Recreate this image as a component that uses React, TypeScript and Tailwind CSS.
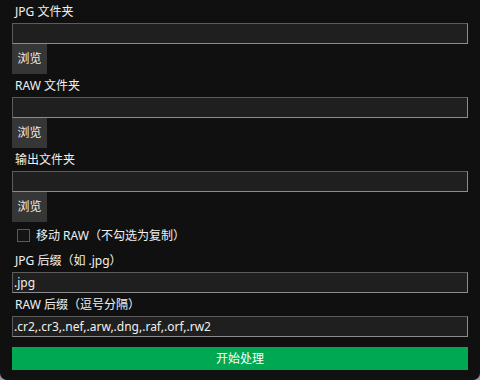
import { useState } from 'react';

const font = { fontFamily: '"Noto Sans", "Noto Sans CJK SC", sans-serif' };

function Label({ text }: { text: string }) {
  return <div className="h-[23px] flex items-center pl-[3px] text-[12px] text-[#f0f0f0]">{text}</div>;
}

function Field({ value, onChange }: { value: string; onChange: (v: string) => void }) {
  return (
    <input
      value={value}
      onChange={(e) => onChange(e.target.value)}
      className="h-[21px] w-full bg-[#1f1f1f] border border-t-[#5c5c5c] border-l-[#5c5c5c] border-b-[#8c8c8c] border-r-[#8c8c8c] px-[1px] text-[12px] text-[#f0f0f0] outline-none"
      style={font}
    />
  );
}

function Browse() {
  return (
    <div className="h-[30px]">
      <button className="h-[30px] w-[35px] bg-[#363636] text-[12px] text-[#f0f0f0]" style={font}>
        浏览
      </button>
    </div>
  );
}

export default function App() {
  const [jpgDir, setJpgDir] = useState('');
  const [rawDir, setRawDir] = useState('');
  const [outDir, setOutDir] = useState('');
  const [moveRaw, setMoveRaw] = useState(false);
  const [jpgExt, setJpgExt] = useState('.jpg');
  const [rawExt, setRawExt] = useState('.cr2,.cr3,.nef,.arw,.dng,.raf,.orf,.rw2');

  return (
    <div className="w-[480px] h-[380px] bg-[#9a9a9a]" style={font}>
      <div className="h-full bg-[#101010] rounded-b-[7px] px-3 flex flex-col">
        <Label text="JPG 文件夹" />
        <Field value={jpgDir} onChange={setJpgDir} />
        <Browse />

        <Label text="RAW 文件夹" />
        <Field value={rawDir} onChange={setRawDir} />
        <Browse />

        <Label text="输出文件夹" />
        <Field value={outDir} onChange={setOutDir} />
        <Browse />

        {/* move / copy toggle */}
        <label className="h-[27px] flex items-center pl-[5px] gap-[6px] text-[12px] text-[#f0f0f0]">
          <input
            type="checkbox"
            checked={moveRaw}
            onChange={(e) => setMoveRaw(e.target.checked)}
            className="appearance-none w-[13px] h-[13px] border border-[#5a5a5a] bg-[#141414] checked:bg-[#00a854]"
          />
          移动 RAW（不勾选为复制）
        </label>

        <Label text="JPG 后缀（如 .jpg）" />
        <Field value={jpgExt} onChange={setJpgExt} />
        <Label text="RAW 后缀（逗号分隔）" />
        <Field value={rawExt} onChange={setRawExt} />

        <button className="mt-[10px] h-[23px] w-full bg-[#00a854] text-[12px] text-white" style={font}>
          开始处理
        </button>
      </div>
    </div>
  );
}
